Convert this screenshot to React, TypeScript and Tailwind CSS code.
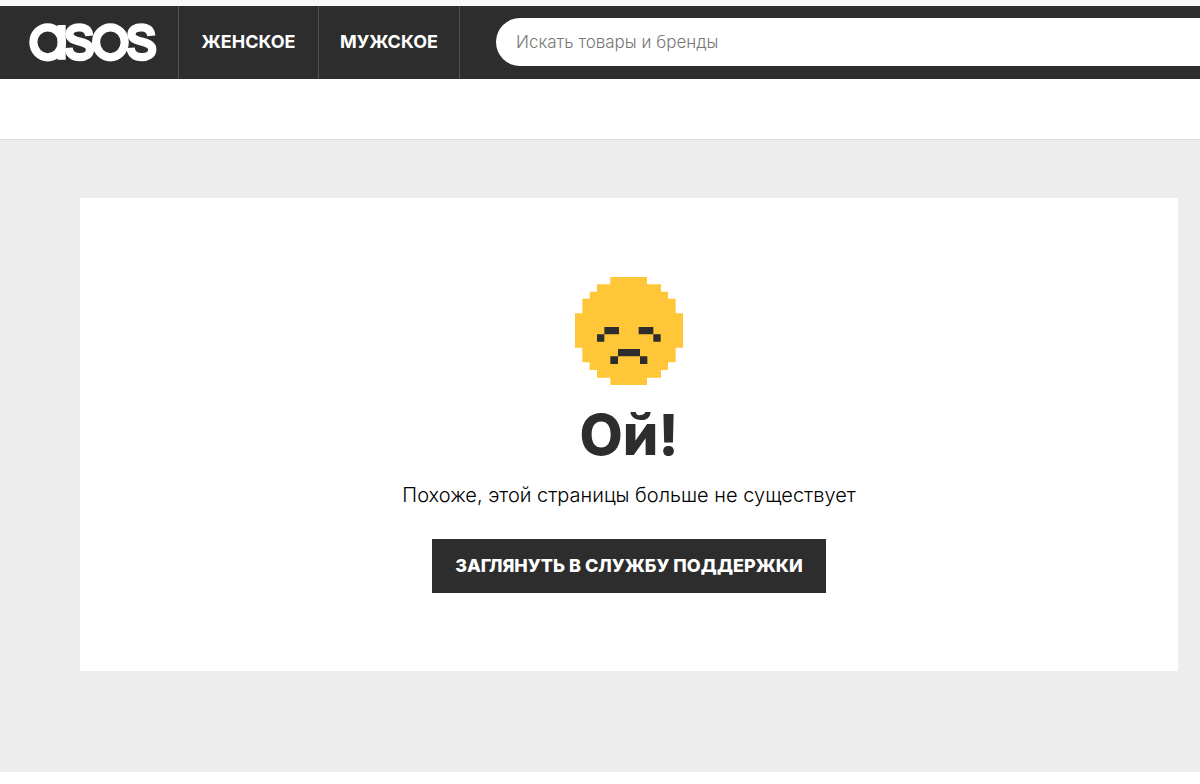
import React from "react";

function Logo() {
  return (
    <svg viewBox="0 0 128 40" className="h-10 w-32" fill="none" role="img" aria-label="ASOS">
      <g stroke="#fff" strokeWidth="8.2">
        <ellipse cx="18.7" cy="20.3" rx="14.3" ry="15" />
        <path d="M32.6 3v34.8" />
        <path d="M60.3 13.8C59.8 7.8 56 5.3 50.5 5.3C44.5 5.3 40.5 7.8 40.5 12.2C40.5 17 45.5 18.2 50.5 19.5C56.5 21 61 22.7 61 27.6C61 32.5 56.500 35.2 51 35.2C44 35.2 40 32 39.6 25.8" />
        <ellipse cx="81.4" cy="20.3" rx="14.3" ry="15" />
        <path d="M122.3 13.8C121.8 7.8 118 5.3 112.5 5.3C106.5 5.3 102.5 7.8 102.5 12.2C102.5 17 107.5 18.2 112.5 19.5C118.5 21 123.3 22.7 123.3 27.6C123.3 32.5 118.5 35.2 113 35.2C106 35.2 102 32 101.6 25.8" />
      </g>
    </svg>
  );
}

function SadFace() {
  return (
    <svg viewBox="0 0 324 324" className="h-[108px] w-[108px]" aria-hidden="true">
      <path
        fill="#ffc737"
        d="M106 0H216V22H258V44H279V65H302V109H324V212H302V256H279V279H258V302H216V324H106V302H66V279H44V256H22V212H0V109H22V65H44V44H66V22H106Z"
      />
      <path
        fill="#2d2d2d"
        d="M88 150h44v22H88zM66 172h22v22H66zM191 150h44v22h-44zM235 172h22v22h-22zM129 216h66v22h-66zM106 238h23v23h-23zM195 238h22v23h-22z"
      />
    </svg>
  );
}

export default function App() {
  return (
    <div className="min-h-screen bg-white font-['Inter','Noto_Sans',sans-serif] text-[#2d2d2d]">
      <div className="h-1.5 bg-[#f8f8f8]" />
      <header className="flex h-[73px] items-stretch bg-[#2d2d2d]">
        <a href="#home" className="flex items-center border-r border-[#525252] pb-px pl-[29px] pr-[21px]">
          <Logo />
        </a>
        <nav className="flex text-lg font-bold text-white">
          <a href="#women" className="flex w-[140px] items-center justify-center border-r border-[#525252] pb-px">
            ЖЕНСКОЕ
          </a>
          <a href="#men" className="flex w-[141px] items-center justify-center border-r border-[#525252] pb-px">
            МУЖСКОЕ
          </a>
        </nav>
        <form className="flex flex-1 items-center pb-px pl-9">
          <input
            type="search"
            aria-label="Искать товары и бренды"
            placeholder="Искать товары и бренды"
            className="h-12 w-full rounded-l-full bg-white px-5 text-[17px] font-light text-[#2d2d2d] outline-none placeholder:text-[#777777]"
          />
        </form>
      </header>
      <div className="h-[61px] border-b border-[#dddddd]" />
      <main className="bg-[#ededed] pb-[101px] pl-20 pr-[22px] pt-[58px]">
        <section className="flex flex-col items-center bg-white pb-[78px] pt-[79px]">
          <SadFace />
          <h1 className="mt-5 text-[56px] font-extrabold leading-[60px]">Ой!</h1>
          <p className="mt-4 text-xl leading-7 font-light text-black">
            Похоже, этой страницы больше не существует
          </p>
          <a
            href="#support"
            className="mt-[30px] flex h-[54px] items-center bg-[#2d2d2d] px-[23px] text-lg font-extrabold text-white"
          >
            ЗАГЛЯНУТЬ В СЛУЖБУ ПОДДЕРЖКИ
          </a>
        </section>
      </main>
    </div>
  );
}
